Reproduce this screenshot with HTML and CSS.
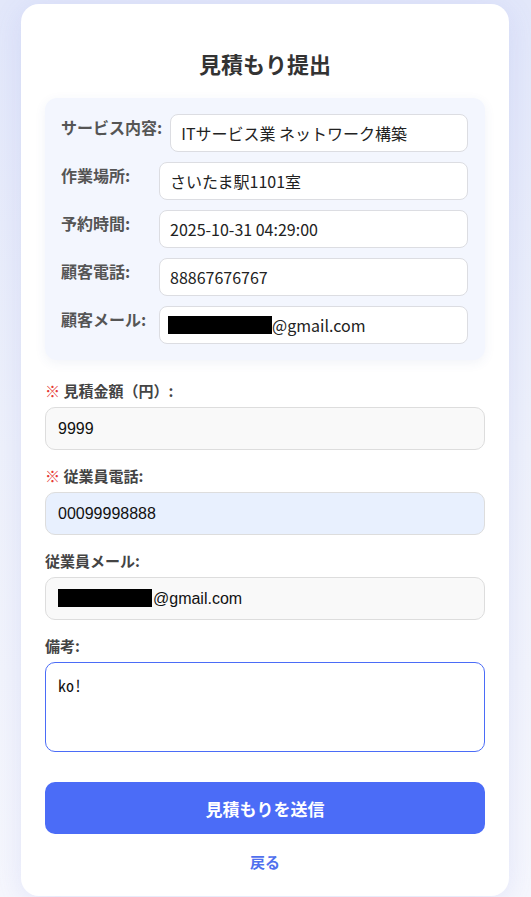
FILE: index.html
```html
<!DOCTYPE html>
<html lang="ja">
<head>
<meta charset="utf-8">
<title>見積もり提出</title>
<link rel="stylesheet" href="styles.css">
</head>
<body>
<main class="card">
  <h2 class="title">見積もり提出</h2>

  <section class="info">
    <div class="info-row">
      <span class="info-label">サービス内容:</span>
      <div class="info-value">ITサービス業 ネットワーク構築</div>
    </div>
    <div class="info-row">
      <span class="info-label">作業場所:</span>
      <div class="info-value">さいたま駅1101室</div>
    </div>
    <div class="info-row">
      <span class="info-label">予約時間:</span>
      <div class="info-value">2025-10-31 04:29:00</div>
    </div>
    <div class="info-row">
      <span class="info-label">顧客電話:</span>
      <div class="info-value">88867676767</div>
    </div>
    <div class="info-row">
      <span class="info-label">顧客メール:</span>
      <div class="info-value"><span class="redact redact-info"></span>@gmail.com</div>
    </div>
  </section>

  <form class="form">
    <div class="field">
      <label class="field-label"><span class="req">※</span> 見積金額（円）:</label>
      <input class="input" type="text" value="9999">
    </div>
    <div class="field">
      <label class="field-label"><span class="req">※</span> 従業員電話:</label>
      <input class="input input-autofill" type="text" value="00099998888">
    </div>
    <div class="field">
      <label class="field-label">従業員メール:</label>
      <div class="redact-wrap">
        <input class="input input-redacted" type="text" value="@gmail.com">
        <span class="redact redact-input"></span>
      </div>
    </div>
    <div class="field">
      <label class="field-label">備考:</label>
      <textarea class="textarea">ko!</textarea>
    </div>
    <button class="submit" type="button">見積もりを送信</button>
    <a class="back" href="#">戻る</a>
  </form>
</main>
</body>
</html>
```
FILE: styles.css
```css
* {
  box-sizing: border-box;
}

html, body {
  margin: 0;
  padding: 0;
}

body {
  min-height: 100vh;
  background: linear-gradient(180deg, #e2e7fa 0%, #eef1fb 50%, #f6f7fd 100%);
  font-family: "Noto Sans CJK JP", "Noto Sans", sans-serif;
  padding: 4px 1px 0 0;
}

.card {
  width: 488px;
  margin: 0 auto;
  background: #ffffff;
  border-radius: 18px;
  box-shadow: 0 6px 30px rgba(90, 110, 220, 0.13);
  padding: 24px 24px 24px;
  display: flex;
  flex-direction: column;
}

.title {
  margin: 20px 0 20px;
  font-size: 22px;
  line-height: 30px;
  font-weight: 700;
  color: #333333;
  text-align: center;
}

.info {
  background: #f3f6fe;
  border-radius: 12px;
  box-shadow: 0 3px 12px rgba(60, 80, 160, 0.07);
  padding: 16px 17px 16px 16px;
  display: flex;
  flex-direction: column;
  gap: 10px;
  margin-bottom: 21px;
}

.info-row {
  display: flex;
  align-items: flex-start;
  gap: 8px;
}

.info-label {
  min-width: 90px;
  flex-shrink: 0;
  font-size: 16px;
  line-height: 26px;
  font-weight: 700;
  color: #555555;
}

.info-value {
  flex: 1;
  height: 38px;
  background: #ffffff;
  border: 1px solid #dcdde2;
  border-radius: 8px;
  padding: 0 10px;
  display: flex;
  align-items: center;
  font-size: 16px;
  color: #222222;
  white-space: nowrap;
}

.redact {
  display: inline-block;
  background: #000000;
}

.redact-info {
  width: 104px;
  height: 18px;
  margin-left: -2px;
}

.form {
  display: flex;
  flex-direction: column;
}

.field {
  display: flex;
  flex-direction: column;
  margin-bottom: 16px;
}

.field-label {
  font-size: 15px;
  line-height: 20px;
  font-weight: 700;
  color: #444444;
  margin-bottom: 6px;
}

.req {
  color: #e53935;
}

.input {
  width: 100%;
  height: 43px;
  padding: 0 12px;
  border: 1px solid #dddddd;
  border-radius: 10px;
  background: #f9f9f9;
  font-family: "Liberation Sans", Arial, sans-serif;
  font-size: 16px;
  color: #111111;
  outline: none;
}

.input-autofill {
  background: #e8f0fe;
}

.redact-wrap {
  position: relative;
}

.input-redacted {
  padding-left: 107px;
}

.redact-input {
  position: absolute;
  left: 13px;
  top: 12px;
  width: 94px;
  height: 18px;
}

.textarea {
  width: 100%;
  height: 90px;
  padding: 12px;
  border: 1px solid #4b6cf7;
  border-radius: 10px;
  background: #ffffff;
  font-family: "Noto Sans Mono CJK JP", "DejaVu Sans Mono", monospace;
  font-size: 16px;
  line-height: 20px;
  color: #111111;
  resize: none;
  outline: none;
}

.submit {
  margin-top: 14px;
  height: 52px;
  border: none;
  border-radius: 10px;
  background: #4b6cf7;
  color: #ffffff;
  font-family: "Noto Sans CJK JP", sans-serif;
  font-size: 17px;
  font-weight: 700;
  cursor: pointer;
}

.back {
  margin-top: 18px;
  align-self: center;
  font-size: 15px;
  line-height: 20px;
  font-weight: 700;
  color: #5070ee;
  text-decoration: none;
}
```
